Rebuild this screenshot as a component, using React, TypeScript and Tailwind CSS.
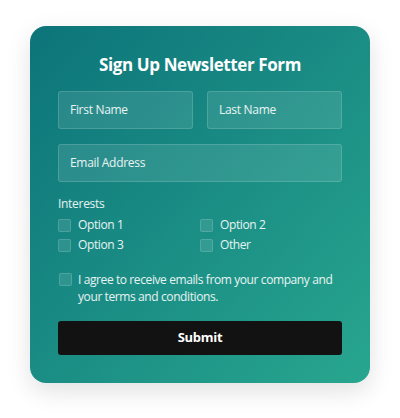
import React from "react";

const font = { fontFamily: '"Open Sans", "Noto Sans", sans-serif' };

function Box() {
  return <span className="block w-[13px] h-[13px] shrink-0 rounded-[2px] bg-white/10 border border-white/15" />;
}

function Option({ label }: { label: string }) {
  return (
    <label className="flex items-center gap-[7px] h-[20px]">
      <Box />
      <span className="text-[12px] tracking-[-0.4px] text-white/90">{label}</span>
    </label>
  );
}

const field =
  "h-[38px] rounded-[3px] bg-white/10 border border-white/15 flex items-center px-[11px] text-[12px] tracking-[-0.3px] text-white/90";

export default function App() {
  return (
    <div className="w-[400px] h-[418px] bg-white flex items-start justify-center pt-[26px]" style={font}>
      <div className="w-[340px] h-[357px] rounded-[16px] bg-gradient-to-br from-[#0c7479] to-[#28a68f] shadow-[0_8px_24px_rgba(0,0,0,0.12)] px-[28px] pt-[27px]">
        <h1 className="text-center text-white font-bold text-[17px] tracking-[-0.4px] leading-6">Sign Up Newsletter Form</h1>
        <div className="mt-[14px] grid grid-cols-2 gap-[14px]">
          <div className={field}>First Name</div>
          <div className={field}>Last Name</div>
        </div>
        <div className={"mt-[15px] " + field}>Email Address</div>
        <div className="mt-[13px] text-[12px] tracking-[-0.3px] text-white/90 leading-[18px]">Interests</div>
        <div className="mt-[2px] grid grid-cols-2">
          <Option label="Option 1" />
          <Option label="Option 2" />
          <Option label="Option 3" />
          <Option label="Other" />
        </div>
        <div className="mt-[16px] flex items-start gap-[6px] pl-[1px]">
          <span className="mt-[2px]"><Box /></span>
          <span className="text-[12px] tracking-[-0.4px] leading-[17px] text-white/90">I agree to receive emails from your company and your terms and conditions.</span>
        </div>
        <button className="mt-[16px] w-full h-[34px] rounded-[3px] bg-[#121212] text-white font-bold text-[13px] tracking-[-0.3px]">Submit</button>
      </div>
    </div>
  );
}
